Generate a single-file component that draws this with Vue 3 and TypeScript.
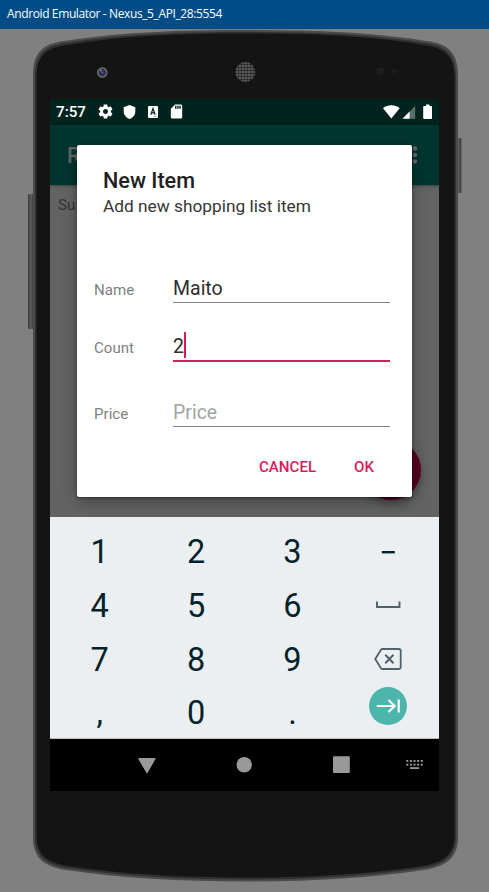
<script setup lang="ts">
import { ref } from 'vue'

interface Key {
  id: string
  label?: string
  icon?: 'minus' | 'space' | 'delete' | 'next'
}

const name = ref('Maito')
const count = ref('2')

const keys: Key[] = [
  { id: '1', label: '1' },
  { id: '2', label: '2' },
  { id: '3', label: '3' },
  { id: 'minus', icon: 'minus' },
  { id: '4', label: '4' },
  { id: '5', label: '5' },
  { id: '6', label: '6' },
  { id: 'space', icon: 'space' },
  { id: '7', label: '7' },
  { id: '8', label: '8' },
  { id: '9', label: '9' },
  { id: 'delete', icon: 'delete' },
  { id: 'comma', label: ',' },
  { id: '0', label: '0' },
  { id: 'dot', label: '.' },
  { id: 'next', icon: 'next' },
]

const dotColumns = [0, 1, 2, 3, 4]
</script>

<template>
  <div class="window">
    <header class="titlebar">Android Emulator - Nexus_5_API_28:5554</header>

    <main class="stage">
      <svg class="device" width="489" height="863" viewBox="0 29 489 863">
        <defs>
          <linearGradient id="side" x1="0" x2="1" y1="0" y2="0">
            <stop offset="0" stop-color="#3a3a3a" />
            <stop offset="0.5" stop-color="#606060" />
            <stop offset="1" stop-color="#303030" />
          </linearGradient>
          <pattern id="mesh" width="3" height="3" patternUnits="userSpaceOnUse">
            <rect width="3" height="3" fill="#5c5c5c" />
            <circle cx="1.5" cy="1.5" r="1.1" fill="#181818" />
          </pattern>
          <radialGradient id="lens">
            <stop offset="0" stop-color="#6464b4" />
            <stop offset="0.35" stop-color="#26265e" />
            <stop offset="0.6" stop-color="#3a3a42" />
            <stop offset="0.85" stop-color="#77777a" />
            <stop offset="1" stop-color="#333" />
          </radialGradient>
        </defs>
        <rect x="28" y="194" width="6" height="135" rx="1" fill="url(#side)" />
        <rect x="456" y="138" width="5.3" height="55" rx="1" fill="url(#side)" />
        <path
          d="M33 76C33 52 43 44 64 41C120 32 180 30 245.500 30C311 30 371 32 427 41C448 44 458 52 458 76V838C458 860 443 867 424 870C370 878 311 881.500 245.500 881.500C180 881.500 120 878 66 870C47 867 33 860 33 838Z"
          fill="#4b4b4c"
        />
        <path
          d="M35 77C35 54 45 46 65 43C121 34 180 32 245.500 32C311 32 370 34 426 43C446 46 456 54 456 77V837C456 858 442 865 423 868C369 876 311 879.500 245.500 879.500C180 879.500 121 876 67 868C48 865 35 858 35 837Z"
          fill="#303031"
        />
        <path
          d="M36.500 78C36.500 56 46 48 66 45.200C122 35.500 180 33.500 245.500 33.500C311 33.500 369 35.500 425 45.200C445 48 454.500 56 454.500 78V836C454.500 856 441 863 422 866C369 874 311 877.500 245.500 877.500C180 877.500 122 874 68 866C49 863 36.500 856 36.500 836Z"
          fill="#141414"
        />
        <circle cx="102.300" cy="72.500" r="5.500" fill="url(#lens)" />
        <circle cx="100.800" cy="70.500" r="0.800" fill="#b0b0d8" />
        <circle cx="245.300" cy="72" r="10" fill="url(#mesh)" />
        <circle cx="380.500" cy="71" r="4" fill="#1d1d1d" />
        <circle cx="394.300" cy="71" r="2.500" fill="#1d1d1d" />
      </svg>

      <section class="screen">
        <div class="statusbar">
          <span class="clock">7:57</span>
          <svg class="gear" width="17" height="17" viewBox="0 0 24 24">
            <path
              fill="#fff"
              d="M19.430 12.980c.040-.320.070-.640.070-.980s-.030-.660-.070-.980l2.110-1.650c.190-.150.240-.420.120-.640l-2-3.460c-.120-.220-.390-.300-.610-.220l-2.490 1c-.520-.400-1.080-.730-1.690-.980l-.380-2.650C14.460 2.180 14.250 2 14 2h-4c-.250 0-.460.180-.490.420l-.380 2.650c-.610.250-1.170.590-1.690.980l-2.490-1c-.230-.090-.490 0-.610.220l-2 3.460c-.130.220-.070.490.120.640l2.110 1.650c-.040.320-.070.650-.070.980s.030.660.070.980l-2.110 1.650c-.190.150-.240.420-.120.640l2 3.460c.120.220.390.300.610.220l2.490-1c.520.400 1.080.730 1.690.980l.380 2.650c.030.240.240.420.490.420h4c.250 0 .460-.180.490-.420l.380-2.650c.610-.250 1.170-.590 1.690-.980l2.490 1c.230.090.490 0 .610-.220l2-3.460c.120-.220.070-.490-.120-.640l-2.110-1.650zM12 15.500c-1.930 0-3.500-1.570-3.500-3.500s1.570-3.500 3.500-3.500 3.500 1.570 3.500 3.500-1.570 3.500-3.500 3.500z"
            />
          </svg>
          <svg class="shield" width="13" height="14" viewBox="0 0 13 14">
            <path fill="#fff" d="M6.500 0L12.300 2.200V6.500C12.300 10 10 12.800 6.500 14C3 12.800.7 10 .7 6.500V2.200Z" />
          </svg>
          <svg class="abox" width="10" height="12" viewBox="0 0 10 12">
            <rect width="10" height="12" rx="1" fill="#fff" />
            <path d="M2.800 8.700L5 2.600L7.200 8.700M3.600 6.900H6.400" fill="none" stroke="#00231e" stroke-width="1.200" />
            <path d="M5.500 10.400H9" stroke="#8a9794" stroke-width="0.700" />
          </svg>
          <svg class="sdcard" width="17" height="17" viewBox="0 0 24 24">
            <path
              fill="#fff"
              d="M18 2h-8L4.020 8 4 20c0 1.100.9 2 2 2h12c1.100 0 2-.9 2-2V4c0-1.100-.9-2-2-2zm-6 6h-2V4h2v4zm3 0h-2V4h2v4zm3 0h-2V4h2v4z"
            />
          </svg>
          <svg class="signals" width="50" height="16" viewBox="0 0 50 16">
            <path d="M0 4.200C4.700.4 12 .4 16.700 4.200L8.350 14.500Z" fill="#fff" />
            <path d="M32.200 2V14.700H19.500Z" fill="#58706c" />
            <path d="M26.600 7.600V14.700H19.500Z" fill="#fff" />
            <path d="M43 .500h3.400V2H48.100a.9.900 0 0 1 .9.900V14a.9.900 0 0 1-.9.900H41.100a.9.900 0 0 1-.9-.9V2.900a.9.900 0 0 1 .9-.9H43Z" fill="#fff" />
          </svg>
        </div>

        <div class="appbar">
          <span class="apptitle">R</span>
          <svg width="6" height="20" viewBox="0 0 6 20">
            <circle v-for="n in 3" :key="n" cx="3" :cy="n * 6.500 - 3" r="2.200" fill="#666" />
          </svg>
        </div>

        <div class="content">
          <span class="sum">Su</span>
          <span class="fab"></span>
        </div>

        <div class="keyboard">
          <button v-for="key in keys" :key="key.id" class="key" type="button">
            <span v-if="key.label">{{ key.label }}</span>
            <svg v-else-if="key.icon === 'minus'" width="14" height="34" viewBox="0 0 14 34">
              <rect x="0.800" y="16" width="13" height="2.400" fill="#02222b" />
            </svg>
            <svg v-else-if="key.icon === 'space'" width="26" height="12" viewBox="0 0 26 12">
              <path d="M2 1.500V7H24.500V1.500" fill="none" stroke="#4f626b" stroke-width="1.900" />
            </svg>
            <svg v-else-if="key.icon === 'delete'" width="28" height="22" viewBox="0 0 28 22">
              <path
                d="M8.200 1H24.800Q26.700 1 26.700 2.900V19.100Q26.700 21 24.800 21H8.200Q7.500 21 7 20.300L1.200 11L7 1.700Q7.500 1 8.200 1Z"
                fill="none"
                stroke="#4f626b"
                stroke-width="1.800"
              />
              <path d="M11.300 6.800L19.500 15.200M19.500 6.800L11.300 15.200" stroke="#4f626b" stroke-width="2" />
            </svg>
            <svg v-else class="next" width="38" height="38" viewBox="0 0 38 38">
              <circle cx="19" cy="19" r="19" fill="#4db6ac" />
              <path d="M7.800 19H25.500M19.500 13L25.600 19L19.500 25M29.700 12.500V25.500" fill="none" stroke="#fff" stroke-width="2.200" />
            </svg>
          </button>
        </div>

        <nav class="navbar">
          <svg width="389" height="52" viewBox="50 739 389 52" fill="#999">
            <path d="M139 758H155Q156 758 155.500 759L147.500 773Q147 774 146.500 773L138.300 759Q138 758 139 758Z" />
            <circle cx="244.200" cy="764.700" r="7.700" />
            <rect x="333" y="756.200" width="16.800" height="16.700" rx="1" />
            <g>
              <rect v-for="c in dotColumns" :key="'a' + c" :x="406.300 + c * 3.600" y="760" width="2" height="1.900" />
              <rect v-for="c in dotColumns" :key="'b' + c" :x="406.300 + c * 3.600" y="763.700" width="2" height="1.900" />
              <rect x="410" y="767.200" width="9" height="1.800" />
            </g>
          </svg>
        </nav>

        <div class="dialog" role="dialog">
          <h1>New Item</h1>
          <p>Add new shopping list item</p>
          <div class="form">
            <div class="row">
              <label>Name</label>
              <div class="field">{{ name }}</div>
            </div>
            <div class="row focused">
              <label>Count</label>
              <div class="field">{{ count }}<i class="caret"></i></div>
            </div>
            <div class="row empty">
              <label>Price</label>
              <div class="field">Price</div>
            </div>
          </div>
          <div class="actions">
            <button type="button">CANCEL</button>
            <button type="button">OK</button>
          </div>
        </div>
      </section>
    </main>
  </div>
</template>

<style>
body {
  margin: 0;
  background: #808080;
}
</style>

<style scoped>
.window {
  width: 489px;
  height: 892px;
  overflow: hidden;
  display: flex;
  flex-direction: column;
  background: #808080;
  font-family: Roboto, sans-serif;
}
svg {
  display: block;
  flex: none;
}
button {
  border: 0;
  padding: 0;
  background: none;
  font: inherit;
}
.titlebar {
  height: 29px;
  line-height: 28px;
  padding-left: 7px;
  background: #004c89;
  color: #fff;
  font-family: 'Open Sans', sans-serif;
  font-size: 12px;
  letter-spacing: -0.380px;
  white-space: nowrap;
}
.stage {
  display: grid;
  height: 863px;
}
.device,
.screen {
  grid-area: 1 / 1;
}
.screen {
  position: relative;
  width: 389px;
  height: 692px;
  margin: 70px 0 0 50px;
  display: flex;
  flex-direction: column;
  overflow: hidden;
  background: #636363;
}
.statusbar {
  height: 25.500px;
  display: flex;
  align-items: center;
  box-sizing: border-box;
  padding: 0 6px;
  background: #00231e;
  color: #fff;
}
.clock {
  width: 41px;
  font-size: 15.200px;
  font-weight: 500;
  line-height: 26px;
  padding-top: 1px;
}
.shield {
  margin-left: 9px;
}
.abox {
  margin-left: 12px;
}
.sdcard {
  margin-left: 10px;
}
.signals {
  margin-left: auto;
}
.appbar {
  height: 60.500px;
  display: flex;
  align-items: center;
  justify-content: space-between;
  box-sizing: border-box;
  padding: 0 21px 0 17px;
  background: #00352f;
  color: #666;
  box-shadow: 0 1px 3px rgba(0, 0, 0, 0.350);
  z-index: 1;
}
.apptitle {
  padding-top: 2px;
  font-size: 21.600px;
  font-weight: 500;
}
.content {
  height: 332px;
  display: flex;
  justify-content: space-between;
  align-items: flex-end;
  box-sizing: border-box;
  padding: 10px 18px 17px 8px;
  background: #636363;
}
.sum {
  align-self: flex-start;
  color: #343434;
  font-size: 15.200px;
  line-height: 20px;
}
.fab {
  width: 60px;
  height: 60px;
  border-radius: 50%;
  background: #54001f;
  box-shadow: 0 4px 8px rgba(0, 0, 0, 0.300);
}
.keyboard {
  height: 222px;
  box-sizing: border-box;
  padding: 8px 2.500px 0 1px;
  border-bottom: 1px solid #b9bfc2;
  background: #ebeff2;
  display: grid;
  grid-template-columns: repeat(4, 1fr);
  grid-template-rows: repeat(4, 53.700px);
  z-index: 1;
}
.key {
  display: flex;
  align-items: center;
  justify-content: center;
  color: #02222b;
  font-size: 32.500px;
  line-height: 51px;
}
.key span {
  padding: 2px 0 0 1px;
}
.next {
  margin-bottom: 13px;
}
.navbar {
  height: 52px;
  background: #000;
}
.dialog {
  position: absolute;
  left: 27px;
  top: 46px;
  width: 335px;
  height: 351.500px;
  box-sizing: border-box;
  padding: 23px 22px 0 17px;
  border-radius: 2px;
  background: #fff;
  box-shadow: 0 5px 16px rgba(0, 0, 0, 0.300), 0 1px 3px rgba(0, 0, 0, 0.400);
  z-index: 2;
}
h1,
p {
  margin: 0 0 0 9px;
}
h1 {
  color: #212121;
  font-size: 21.600px;
  font-weight: 500;
  line-height: 26px;
}
p {
  color: #363636;
  font-size: 17.300px;
  line-height: 24px;
  padding-bottom: 1px;
}
.form {
  padding-top: 55px;
}
.row {
  display: grid;
  grid-template-columns: 79px 217px;
  align-items: baseline;
}
label {
  color: #808080;
  font-size: 15.100px;
}
.field {
  display: flex;
  align-items: center;
  box-sizing: border-box;
  height: 29px;
  border-bottom: 1px solid #868686;
  color: #2e2e2e;
  font-size: 19.500px;
  line-height: 28px;
  padding-top: 2px;
}
.focused {
  margin: 29px 0 36px;
}
.focused .field {
  height: 30px;
  padding-top: 0;
  line-height: 27px;
  border-bottom: 2px solid #d81b60;
}
.caret {
  width: 2px;
  height: 26px;
  margin-bottom: 2px;
  background: #d81b60;
}
.empty .field {
  color: #a3a3a3;
}
.actions {
  display: flex;
  justify-content: flex-end;
  gap: 38px;
  padding: 22px 16px 0 0;
  color: #d81b60;
  font-size: 15.100px;
  font-weight: 500;
  line-height: 36px;
}
.actions button {
  color: inherit;
}
</style>
